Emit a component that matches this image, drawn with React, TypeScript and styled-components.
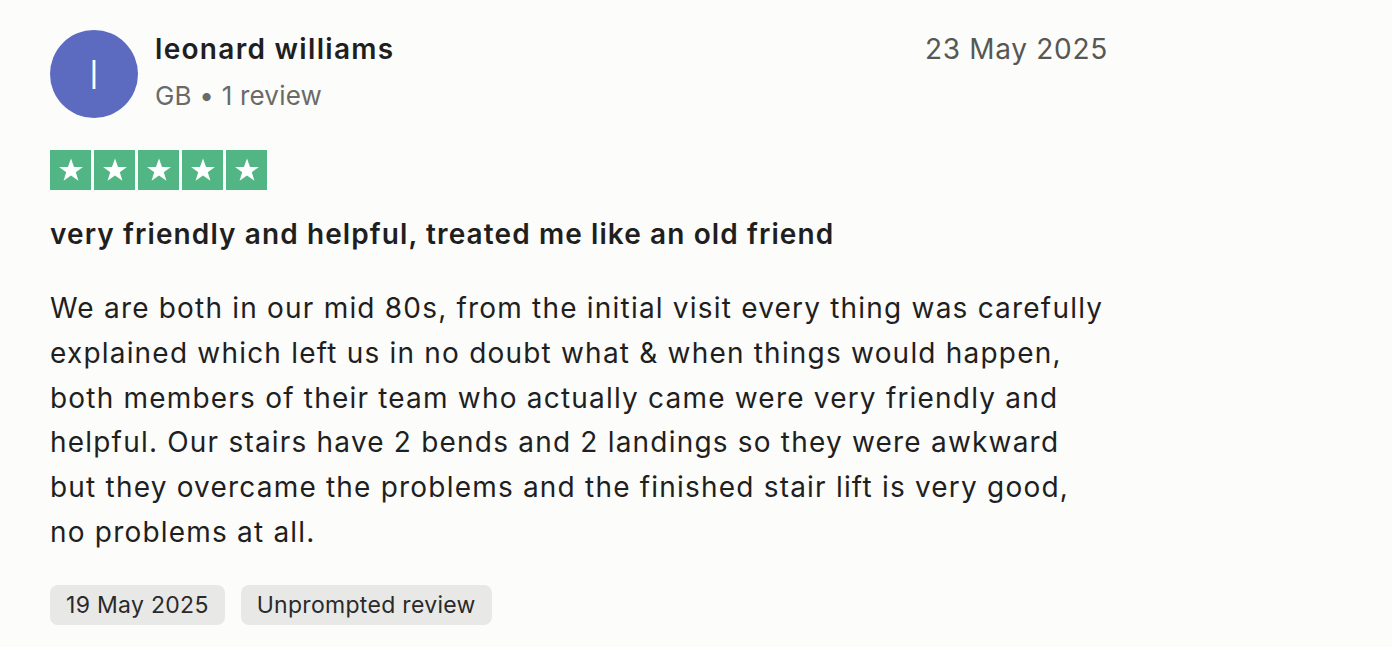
import React from 'react';
import styled, { createGlobalStyle } from 'styled-components';

const GlobalStyle = createGlobalStyle`
  html, body {
    margin: 0;
    padding: 0;
    background: #fcfcfb;
  }
  body {
    font-family: Inter, "Liberation Sans", sans-serif;
    color: #1f1f1f;
  }
`;

const Card = styled.article`
  width: 1058px;
  padding: 30px 0 0 50px;
`;

const Header = styled.header`
  display: flex;
  align-items: flex-start;
`;

const Avatar = styled.div<{ bg: string }>`
  width: 88px;
  height: 88px;
  border-radius: 50%;
  background: ${({ bg }) => bg};
  color: #fff;
  display: flex;
  align-items: center;
  justify-content: center;
  font-size: 40px;
  font-weight: 300;
  flex-shrink: 0;
`;

const Who = styled.div`
  flex: 1;
  margin-left: 17px;
  padding-top: 1px;
`;

const Name = styled.div`
  font-size: 28px;
  font-weight: 600;
  line-height: 36px;
  letter-spacing: 1.3px;
  color: #1f1f1f;
`;

const Meta = styled.div`
  margin-top: 14px;
  font-size: 26px;
  line-height: 30px;
  letter-spacing: 0.2px;
  color: #6a6a67;
`;

const Published = styled.time`
  font-size: 28px;
  line-height: 36px;
  letter-spacing: 0.7px;
  color: #575753;
  padding-top: 1px;
`;

const Stars = styled.div`
  display: flex;
  gap: 3px;
  margin-top: 32px;
`;

const StarBox = styled.div`
  width: 41px;
  height: 40px;
  background: #51b683;
  display: flex;
  align-items: center;
  justify-content: center;
`;

const Title = styled.h2`
  margin: 26px 0 0;
  font-size: 28px;
  font-weight: 600;
  line-height: 36px;
  letter-spacing: 1.1px;
  color: #1f1f1f;
`;

const Body = styled.p`
  max-width: 1054px;
  margin: 34px 0 0;
  font-size: 28px;
  line-height: 44.8px;
  letter-spacing: 1.2px;
  color: #1f1f1f;
`;

const Tags = styled.div`
  display: flex;
  gap: 16px;
  margin-top: 30px;
`;

const Tag = styled.span`
  height: 40px;
  padding: 0 16px;
  display: inline-flex;
  align-items: center;
  border-radius: 8px;
  background: #e8e8e7;
  font-size: 23px;
  letter-spacing: 0.3px;
  color: #2a2a2a;
`;

const Star = () => (
  <svg width="28" height="28" viewBox="0 0 24 24">
    <path
      fill="#fff"
      d="M12 2.2l2.6 7.2h7.6l-6.1 4.5 2.3 7.4L12 16.8l-6.4 4.5 2.3-7.4-6.1-4.5h7.6z"
    />
  </svg>
);

const body =
  'We are both in our mid 80s, from the initial visit every thing was carefully explained which left us in no doubt what & when things would happen, both members of their team who actually came were very friendly and helpful. Our stairs have 2 bends and 2 landings so they were awkward but they overcame the problems and the finished stair lift is very good, no problems at all.';

export default function App() {
  return (
    <>
      <GlobalStyle />
      <Card>
        <Header>
          <Avatar bg="#5c6bc0">l</Avatar>
          <Who>
            <Name>leonard williams</Name>
            <Meta>GB • 1 review</Meta>
          </Who>
          <Published>23 May 2025</Published>
        </Header>
        <Stars>
          {[0, 1, 2, 3, 4].map((i) => (
            <StarBox key={i}>
              <Star />
            </StarBox>
          ))}
        </Stars>
        <Title>very friendly and helpful, treated me like an old friend</Title>
        <Body>{body}</Body>
        <Tags>
          <Tag>19 May 2025</Tag>
          <Tag>Unprompted review</Tag>
        </Tags>
      </Card>
    </>
  );
}
